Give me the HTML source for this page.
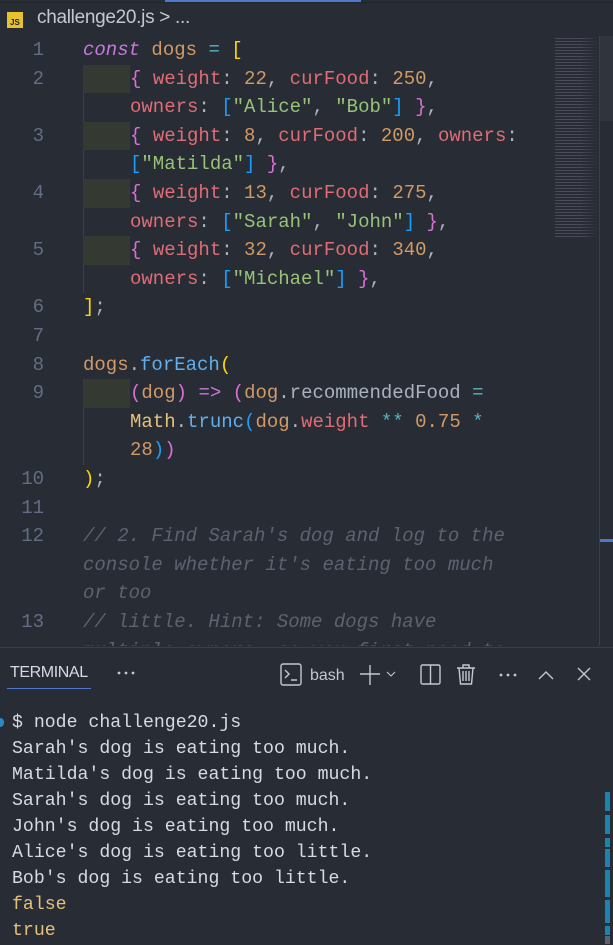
<!DOCTYPE html>
<html><head><style>
*{margin:0;padding:0;box-sizing:border-box}
body{width:613px;height:945px;background:#282c34;overflow:hidden;position:relative;font-family:"Liberation Mono",monospace}
.row{position:absolute;left:0;height:28.6px;line-height:28.6px;font-size:19px;white-space:pre;color:#abb2bf}
.ln{position:absolute;left:0;width:44px;text-align:right;color:#636d83}
.c{position:absolute;left:83px}
.w{position:absolute;left:130px}
.ind{position:absolute;left:83px;top:0;width:47px;height:28.6px;background:#343a31}
.k{color:#c678dd;font-style:italic}.v{color:#d19a66}.o{color:#56b6c2}.y{color:#ffd700}.p{color:#da70d6}.b{color:#179fff}
.r{color:#e06c75}.n{color:#d19a66}.s{color:#98c379}.f{color:#61afef}.m{color:#e5c07b}.cm{color:#5c6370;font-style:italic}.pl{color:#abb2bf}
.t{position:absolute;left:12px;font-size:18.2px;line-height:26px;color:#d7dae0;white-space:pre;font-family:"Liberation Mono",monospace}
.ic{position:absolute;color:#c5c8ce}
</style></head><body>
<div style="position:absolute;left:165px;top:0;width:196px;height:2px;background:#4d78cc"></div>
<div style="position:absolute;left:0;top:2px;width:613px;height:1px;background:#21252b"></div>
<div style="position:absolute;left:7px;top:12px;width:16px;height:16px;background:#e8c22e;color:#222;font:bold 8px 'Liberation Sans',sans-serif;padding:7px 0 0 3px;line-height:8px">JS</div>
<div style="position:absolute;left:37px;top:7px;font:19px 'Liberation Sans',sans-serif;color:#c5c8ce;letter-spacing:-0.3px">challenge20.js &gt; ...</div>

<div style="position:absolute;left:0;top:36px;width:600px;height:610px;overflow:hidden">
<div class="row" style="top:0"><span class="ln">1</span><span class="c"><span class="k">const</span> <span class="v">dogs</span> <span class="o">=</span> <span class="y">[</span></span></div>
<div class="row" style="top:28.6px"><span class="ln">2</span><span class="ind"></span><span class="w"><span class="p">{</span> <span class="r">weight</span>: <span class="n">22</span>, <span class="r">curFood</span>: <span class="n">250</span>,</span></div>
<div class="row" style="top:57.2px"><span class="ind" style="width:1px;background:#3b4048"></span><span class="w"><span class="r">owners</span>: <span class="b">[</span><span class="s">"Alice"</span>, <span class="s">"Bob"</span><span class="b">]</span> <span class="p">}</span>,</span></div>
<div class="row" style="top:85.8px"><span class="ln">3</span><span class="ind"></span><span class="w"><span class="p">{</span> <span class="r">weight</span>: <span class="n">8</span>, <span class="r">curFood</span>: <span class="n">200</span>, <span class="r">owners</span>:</span></div>
<div class="row" style="top:114.4px"><span class="ind" style="width:1px;background:#3b4048"></span><span class="w"><span class="b">[</span><span class="s">"Matilda"</span><span class="b">]</span> <span class="p">}</span>,</span></div>
<div class="row" style="top:143px"><span class="ln">4</span><span class="ind"></span><span class="w"><span class="p">{</span> <span class="r">weight</span>: <span class="n">13</span>, <span class="r">curFood</span>: <span class="n">275</span>,</span></div>
<div class="row" style="top:171.6px"><span class="ind" style="width:1px;background:#3b4048"></span><span class="w"><span class="r">owners</span>: <span class="b">[</span><span class="s">"Sarah"</span>, <span class="s">"John"</span><span class="b">]</span> <span class="p">}</span>,</span></div>
<div class="row" style="top:200.2px"><span class="ln">5</span><span class="ind"></span><span class="w"><span class="p">{</span> <span class="r">weight</span>: <span class="n">32</span>, <span class="r">curFood</span>: <span class="n">340</span>,</span></div>
<div class="row" style="top:228.8px"><span class="ind" style="width:1px;background:#3b4048"></span><span class="w"><span class="r">owners</span>: <span class="b">[</span><span class="s">"Michael"</span><span class="b">]</span> <span class="p">}</span>,</span></div>
<div class="row" style="top:257.4px"><span class="ln">6</span><span class="c"><span class="y">]</span>;</span></div>
<div class="row" style="top:286px"><span class="ln">7</span></div>
<div class="row" style="top:314.6px"><span class="ln">8</span><span class="c"><span class="v">dogs</span>.<span class="f">forEach</span><span class="y">(</span></span></div>
<div class="row" style="top:343.2px"><span class="ln">9</span><span class="ind"></span><span class="w"><span class="p">(</span><span class="v">dog</span><span class="p">)</span> <span class="k" style="font-style:normal">=&gt;</span> <span class="p">(</span><span class="v">dog</span>.recommendedFood <span class="o">=</span></span></div>
<div class="row" style="top:371.8px"><span class="ind" style="width:1px;background:#3b4048"></span><span class="w"><span class="m">Math</span>.<span class="f">trunc</span><span class="b">(</span><span class="v">dog</span>.<span class="r">weight</span> <span class="o">**</span> <span class="n">0.75</span> <span class="o">*</span></span></div>
<div class="row" style="top:400.4px"><span class="ind" style="width:1px;background:#3b4048"></span><span class="w"><span class="n">28</span><span class="b">)</span><span class="p">)</span></span></div>
<div class="row" style="top:429px"><span class="ln">10</span><span class="c"><span class="y">)</span>;</span></div>
<div class="row" style="top:457.6px"><span class="ln">11</span></div>
<div class="row" style="top:486.2px"><span class="ln">12</span><span class="c cm">// 2. Find Sarah's dog and log to the</span></div>
<div class="row" style="top:514.8px"><span class="c cm">console whether it's eating too much</span></div>
<div class="row" style="top:543.4px"><span class="c cm">or too</span></div>
<div class="row" style="top:572px"><span class="ln">13</span><span class="c cm">// little. Hint: Some dogs have</span></div>
<div class="row" style="top:600.6px"><span class="c cm">multiple owners, so you first need to</span></div>
</div>

<!-- minimap -->
<div style="position:absolute;left:555px;top:38px;width:44px;height:200px;opacity:.45;background:repeating-linear-gradient(180deg,#7a6a8a 0 1px,transparent 1px 3px);-webkit-mask:linear-gradient(90deg,#000 60%,transparent)"></div>
<div style="position:absolute;left:599px;top:36px;width:1px;height:610px;background:#3b4048"></div>
<div style="position:absolute;left:600px;top:36px;width:13px;height:85px;background:#2f343d"></div>
<div style="position:absolute;left:600px;top:539px;width:13px;height:3px;background:#4d78cc"></div>

<!-- terminal -->
<div style="position:absolute;left:0;top:647px;width:613px;height:1px;background:#3b4048"></div>
<div style="position:absolute;left:10px;top:664px;font:16px 'Liberation Sans',sans-serif;color:#d7dae0;letter-spacing:-0.4px">TERMINAL</div>
<div style="position:absolute;left:7px;top:688px;width:84px;height:1px;background:#4d78cc"></div>
<svg style="position:absolute;left:115px;top:668px" width="24" height="10"><g fill="#c5c8ce"><circle cx="4" cy="5" r="1.4"/><circle cx="11" cy="5" r="1.4"/><circle cx="18" cy="5" r="1.4"/></g></svg>
<svg style="position:absolute;left:280px;top:660px" width="333" height="30" viewBox="0 0 333 30" fill="none" stroke="#c5c8ce" stroke-width="1.4">
<rect x="1" y="4" width="20" height="21" rx="2"/><path d="M5 10l4 4-4 4M11 20h6"/>
<text x="30" y="20" fill="#c5c8ce" stroke="none" font-family="Liberation Sans" font-size="16">bash</text>
<path d="M80 14h20M90 5v20"/><path d="M107 12l4 4 4-4" stroke-width="1.1"/>
<rect x="141" y="5" width="19" height="19" rx="1.5"/><path d="M150.5 5v19"/>
<path d="M177 8h18M183 8V5h6v3M179 8l1.5 16h11L193 8M183 11v10M186 11v10M189 11v10"/>
<g fill="#c5c8ce" stroke="none"><circle cx="221" cy="15" r="1.4"/><circle cx="228" cy="15" r="1.4"/><circle cx="235" cy="15" r="1.4"/></g>
<path d="M259 19l7-7 7 7"/><path d="M298 8l12 12M310 8l-12 12"/>
</svg>
<div style="position:absolute;left:0;top:718px;width:4px;height:9px;border-radius:0 4px 4px 0;background:#2b8ac1"></div>
<div class="t" style="top:710px">$ node challenge20.js
Sarah's dog is eating too much.
Matilda's dog is eating too much.
Sarah's dog is eating too much.
John's dog is eating too much.
Alice's dog is eating too little.
Bob's dog is eating too little.
<span style="color:#e5c07b">false</span>
<span style="color:#e5c07b">true</span></div>
<div style="position:absolute;left:605px;top:792px;width:5px;height:19px;background:#1b84ad"></div>
<div style="position:absolute;left:605px;top:815px;width:5px;height:19px;background:#1b84ad"></div>
<div style="position:absolute;left:605px;top:838px;width:5px;height:9px;background:#1b84ad"></div>
<div style="position:absolute;left:605px;top:849px;width:5px;height:18px;background:#1b84ad"></div>
<div style="position:absolute;left:605px;top:870px;width:5px;height:27px;background:#1b84ad"></div>
<div style="position:absolute;left:605px;top:900px;width:5px;height:23px;background:#1b84ad"></div>
<div style="position:absolute;left:605px;top:926px;width:5px;height:9px;background:#1b84ad"></div>
<div style="position:absolute;left:605px;top:936px;width:5px;height:8px;background:#5c6370"></div>
</body></html>
